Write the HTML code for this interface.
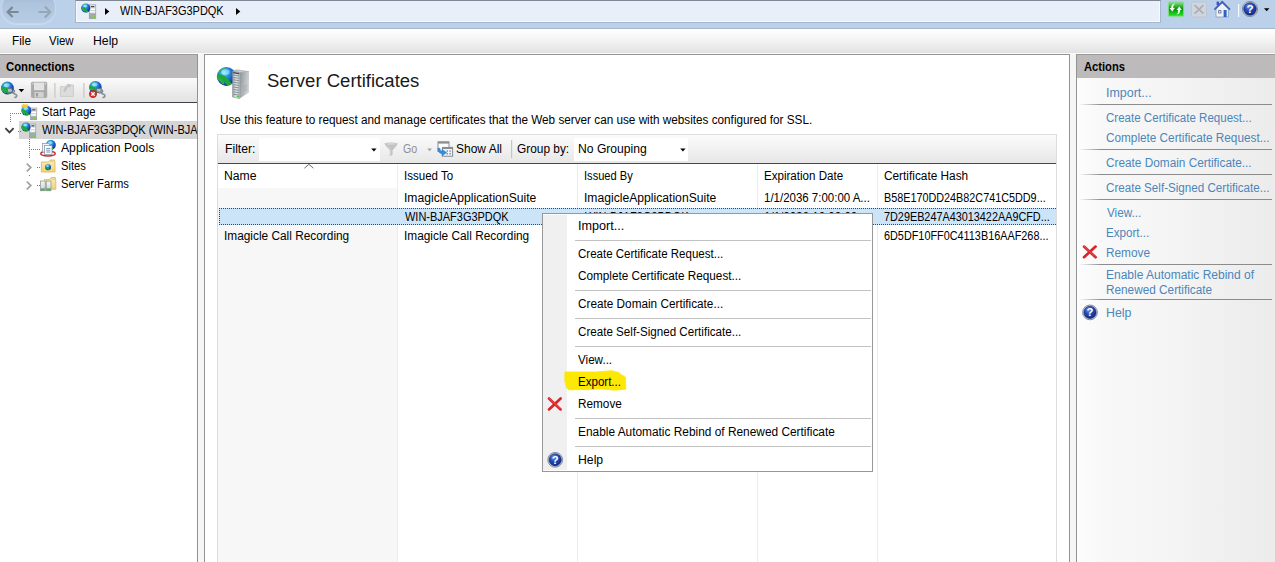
<!DOCTYPE html>
<html><head><meta charset="utf-8"><title>IIS Manager - Server Certificates</title>
<style>
html,body{margin:0;padding:0}
body{width:1275px;height:562px;overflow:hidden;position:relative;background:#f6f6f6;font-family:"Liberation Sans",sans-serif;font-size:12px;color:#000}
div,span,svg{position:absolute;box-sizing:border-box}
.t{white-space:pre;line-height:20px;transform-origin:0 0;display:block}
#topbar{left:0;top:0;width:1275px;height:28px;background:#bbd1ea}
#topline{left:0;top:28px;width:1275px;height:1px;background:#a9b8c9}
#navglass{left:1px;top:-8px;width:55px;height:32px;border-radius:16px/15px;background:linear-gradient(#9fb5cf 0%,#aec4dd 35%,#b7cde6 100%);border:1px solid #c6d8ee;border-top-color:#9db2cc;box-shadow:0 1px 1px rgba(205,222,242,.9)}
#addr{left:75px;top:0;width:1086px;height:23px;background:#e9eff9;border:1px solid #a6b6cd;border-top-color:#7d8796;box-shadow:inset -1px -1px 0 #f6f9fe,inset 1px 0 0 #f6f9fe}
#menubar{left:0;top:29px;width:1275px;height:24px;background:linear-gradient(#ffffff 0%,#f7f7f7 35%,#ececec 70%,#e2e2e2 100%)}
#menuline{left:0;top:53px;width:1275px;height:1px;background:#fbfbfb}
.phead{height:23px;background:#bcbaba}
#conn{left:0;top:54px;width:198px;height:508px;background:#fff;border-right:1px solid #929292;border-top:1px solid #9a9a9a}
#connhead{left:0;top:0;width:197px;top:0}
#conntb{left:0;top:23px;width:197px;height:25px;background:linear-gradient(#fbfbfb,#eeeeee 50%,#e3e2e2);border-bottom:1px solid #3e3e4c}
#sel{left:19px;top:121px;width:178px;height:18px;background:#d5d5d5}
#center{left:204px;top:54px;width:866px;height:520px;background:#fff;border:1px solid #939393}
#fbar{left:218px;top:134px;width:838px;height:29px;background:linear-gradient(#fbfbfb,#f1f1f1 50%,#e7e7e7);border-top:1px solid #dcdcdc}
#fbarline{left:218px;top:163px;width:838px;height:1px;background:#45455a}
#finput{left:259px;top:138px;width:121px;height:23px;background:#fff}
#ginput{left:574px;top:138px;width:114px;height:23px;background:#fff}
#listl{left:217px;top:134px;width:1px;height:440px;background:#dcdcdc}
#listr{left:1056px;top:134px;width:1px;height:440px;background:#dcdcdc}
#namecol{left:218px;top:188px;width:179px;height:380px;background:#f7f7f7}
.cs{top:164px;width:1px;height:400px;background:#ebecf0}
#rowsel{left:219px;top:208px;width:837px;height:17px;background:#cce4f7;border:1px dotted #444;border-right:none}
#actions{left:1076px;top:54px;width:200px;height:520px;background:linear-gradient(90deg,#fdfdfd 0%,#f8f8f8 14%,#f4f4f4 50%,#ebebeb 100%);border-left:1px solid #939393;border-top:1px solid #9a9a9a}
.asep{left:1079px;width:193px;height:1px;background:linear-gradient(90deg,rgba(138,138,138,0) 0,#8c8c8c 22px,#8c8c8c 100%)}
#ctx{left:542px;top:213px;width:331px;height:259px;background:#fff;border:1px solid #989898}
#ctxg{left:0;top:1px;width:24px;height:255px;background:#f0f0f0}
.msep{left:575px;width:296px;height:1px;background:#c3c3c3}
</style></head><body>
<div id="topbar"></div><div id="navglass"></div><div id="topline"></div>
<div id="addr"></div>
<div id="menubar"></div><div id="menuline"></div>

<div id="conn"><div class="phead" id="connhead"></div><div id="conntb"></div></div>
<div id="sel"></div>
<div id="center"></div>
<div id="fbar"></div><div id="fbarline"></div><div id="finput"></div><div id="ginput"></div>
<div id="listl"></div><div id="listr"></div>
<div id="namecol"></div>
<div class="cs" style="left:397px"></div><div class="cs" style="left:577px"></div><div class="cs" style="left:757px"></div><div class="cs" style="left:877px"></div>
<div id="rowsel"></div>
<div id="actions"><div class="phead" style="left:0;top:0;width:199px"></div></div>
<div class="asep" style="top:104px"></div><div class="asep" style="top:149px"></div><div class="asep" style="top:174px"></div><div class="asep" style="top:199px"></div><div class="asep" style="top:264px"></div><div class="asep" style="top:299px"></div>
<svg style="left:0;top:0" width="1275" height="562" viewBox="0 0 1275 562"><defs>
<radialGradient id="gGlobe" cx="0.38" cy="0.3" r="0.75"><stop offset="0" stop-color="#8fe6ff"/><stop offset="0.3" stop-color="#2f9be0"/><stop offset="0.7" stop-color="#1b4fc0"/><stop offset="1" stop-color="#142c86"/></radialGradient>
<radialGradient id="gHelp" cx="0.4" cy="0.3" r="0.8"><stop offset="0" stop-color="#6f94e8"/><stop offset="0.45" stop-color="#2247b4"/><stop offset="1" stop-color="#0f2577"/></radialGradient>
<linearGradient id="gSrvF" x1="0" y1="0" x2="1" y2="0"><stop offset="0" stop-color="#9aa2a8"/><stop offset="0.5" stop-color="#e4e8ea"/><stop offset="1" stop-color="#b4babe"/></linearGradient>
<linearGradient id="gSrvS" x1="0" y1="0" x2="1" y2="0.3"><stop offset="0" stop-color="#8f9599"/><stop offset="1" stop-color="#cfd3d5"/></linearGradient>
<linearGradient id="gGreen" x1="0" y1="0" x2="0" y2="1"><stop offset="0" stop-color="#8fe08f"/><stop offset="0.3" stop-color="#35b535"/><stop offset="0.5" stop-color="#028a02"/><stop offset="0.62" stop-color="#08b008"/><stop offset="1" stop-color="#2fe02f"/></linearGradient>
<linearGradient id="gFolder" x1="0" y1="0" x2="0" y2="1"><stop offset="0" stop-color="#fbeeb4"/><stop offset="1" stop-color="#f0d27a"/></linearGradient>
<linearGradient id="gSmallSrv" x1="0" y1="0" x2="0" y2="1"><stop offset="0" stop-color="#e6e9eb"/><stop offset="0.55" stop-color="#c8cdd0"/><stop offset="1" stop-color="#8f979b"/></linearGradient>
</defs><rect x="89.19999999999999" y="4.8" width="6.6" height="13.8" fill="url(#gSmallSrv)" stroke="#8e969a" stroke-width="0.6"/><rect x="90.99999999999999" y="6.1" width="3.3999999999999995" height="1.1" fill="#33383c"/><rect x="89.89999999999999" y="8.5" width="5.199999999999999" height="1.5" fill="#ffffff"/><rect x="89.89999999999999" y="11.1" width="5.199999999999999" height="1.5" fill="#ffffff"/><rect x="89.49999999999999" y="13.5" width="6.0" height="4.800000000000001" fill="#a2a9ac"/><rect x="92.59999999999998" y="16.0" width="2.6" height="1.9" fill="#7ed62a"/><clipPath id="gc1"><circle cx="85.8" cy="8.0" r="4.6"/></clipPath><circle cx="85.8" cy="8.0" r="4.6" fill="url(#gGlobe)"/><g clip-path="url(#gc1)"><path d="M81.20 8.00 Q84.19 8.00 85.57 9.84 T87.87 12.60" stroke="#1fa83a" stroke-width="2.30" fill="none" stroke-linecap="round"/><path d="M82.12 9.15 q1.38 0.46 2.07 2.07" stroke="#28b044" stroke-width="1.38" fill="none" stroke-linecap="round"/><path d="M82.12 5.70 q1.15 -1.84 3.22 -2.30 q-0.23 1.38 -1.84 1.84 q-0.92 0.92 -1.38 0.46z" fill="#35b24e" opacity="0.8"/><ellipse cx="85.34" cy="5.93" rx="2.07" ry="1.38" fill="#aef2ff" opacity="0.55"/></g>
<path d="M105 8 L109.3 11.5 L105 15z" fill="#000"/>
<path d="M236 8 L240.3 11.5 L236 15z" fill="#000"/>
<rect x="1168.4" y="1.9" width="15.2" height="14.4" rx="0.8" fill="url(#gGreen)" stroke="#86dc86" stroke-width="0.9"/>
<path d="M1175 3.4 q-2.2 1.8 -1.6 4.6 h1.5 l-2.7 3.4 l-2.7 -3.4 h1.7 q-0.3 -3.8 3.8 -4.6z" fill="#f4fbf4"/>
<path d="M1176.4 14.6 q2.2 -1.8 1.6 -4.6 h-1.5 l2.7 -3.4 l2.7 3.4 h-1.7 q0.3 3.8 -3.8 4.6z" fill="#f4fbf4"/>
<rect x="1191.5" y="2" width="15" height="15" rx="1" fill="#d0d6dd" stroke="#bcc3cb" stroke-width="0.8"/>
<path d="M1194.6 5.2 L1203.4 13.6 M1203.4 5.2 L1194.6 13.6" stroke="#a9afb6" stroke-width="1.8" fill="none"/>
<path d="M1216 9 v8 h12.4 v-8 l-6.2 -6z" fill="#eef2f7" stroke="#8e9cb5" stroke-width="0.8"/>
<path d="M1214.4 9.6 L1222.2 1.8 L1230 9.6" stroke="#4460b8" stroke-width="1.7" fill="none" stroke-linejoin="miter"/>
<rect x="1216.6" y="1.6" width="2.4" height="3.6" fill="#3b55c0"/>
<rect x="1223.6" y="10" width="3" height="7" fill="#2f62c8"/>
<rect x="1218.2" y="10.2" width="3.2" height="3.2" fill="#5a6a86"/>
<rect x="1219" y="11" width="1.6" height="1.6" fill="#d7e4f5"/>
<rect x="1238" y="4" width="1.2" height="13" fill="#ffffff" opacity="0.9"/>
<circle cx="1250" cy="9" r="7.6" fill="#cfd4de" stroke="#7d8598" stroke-width="0.9"/><circle cx="1250" cy="9" r="6.3" fill="url(#gHelp)" stroke="#0d1f66" stroke-width="0.6"/><text x="1250" y="13.00" text-anchor="middle" font-family="Liberation Sans,sans-serif" font-weight="700" font-size="11.6" fill="#fff">?</text>
<path d="M1264 8.2 L1269.4 8.2 L1266.7 11.2z" fill="#000"/>
<path d="M18.6 12 H8.4 M12.6 7 L7.6 12 L12.6 17" stroke="#7b8896" stroke-width="2.2" fill="none" stroke-linecap="butt" stroke-linejoin="miter"/>
<path d="M39.2 12 H49.6 M45.4 7 L50.4 12 L45.4 17" stroke="#98a7b8" stroke-width="2.2" fill="none" stroke-linecap="round" stroke-linejoin="round"/>
<path d="M9.2 90.5 l3.2 -1.5 l2 2 l-1.2 2.2 l2.6 1.2 q1.6 1.2 0.4 2.6 l-1.2 0.4" stroke="#8793a0" stroke-width="1.7" fill="none" stroke-linecap="round" stroke-linejoin="round"/><rect x="9.799999999999999" y="89.6" width="4.2" height="3.2" rx="0.8" fill="#c9d2da" stroke="#5d6b78" stroke-width="0.7" transform="rotate(-20 11.7 91)"/>
<clipPath id="gc2"><circle cx="7.4" cy="88" r="6.4"/></clipPath><circle cx="7.4" cy="88" r="6.4" fill="url(#gGlobe)"/><g clip-path="url(#gc2)"><path d="M1.00 88.00 Q5.16 88.00 7.08 90.56 T10.28 94.40" stroke="#1fa83a" stroke-width="3.20" fill="none" stroke-linecap="round"/><path d="M2.28 89.60 q1.92 0.64 2.88 2.88" stroke="#28b044" stroke-width="1.92" fill="none" stroke-linecap="round"/><path d="M2.28 84.80 q1.60 -2.56 4.48 -3.20 q-0.32 1.92 -2.56 2.56 q-1.28 1.28 -1.92 0.64z" fill="#35b24e" opacity="0.8"/><ellipse cx="6.76" cy="85.12" rx="2.88" ry="1.92" fill="#aef2ff" opacity="0.55"/></g>
<rect x="7.6" y="88.6" width="4.6" height="3.6" rx="0.8" fill="#b8c2cc" stroke="#59636e" stroke-width="0.7"/>
<path d="M18.6 89 L24.200000000000003 89 L21.400000000000002 92.2z" fill="#000"/>
<rect x="31.4" y="82.2" width="15.4" height="15.4" rx="1" fill="#a9a9a9" stroke="#9a9a9a" stroke-width="0.6"/>
<rect x="34" y="82.6" width="10.2" height="7.6" fill="#e3e3e3"/>
<rect x="34.6" y="92" width="9" height="5.4" fill="#d2d2d2"/>
<rect x="36" y="93" width="2" height="3.6" fill="#9c9c9c"/>
<rect x="32.2" y="83.2" width="1.2" height="1.2" fill="#e8e8e8"/><rect x="44.8" y="83.2" width="1.2" height="1.2" fill="#e8e8e8"/>
<rect x="54.3" y="83" width="1.2" height="15" fill="#c9c6bc"/>
<path d="M60.4 86.6 h5 l1.4 -1.6 h6.6 v11.4 h-13z" fill="#dcdcdc" stroke="#c6c6c6" stroke-width="0.8"/>
<path d="M63.2 91.6 q1.2 -4.4 4.6 -6 l-0.8 -1.8 l4 0.6 l-1.2 3.6 l-0.9 -1.4 q-2.2 1.2 -3.6 5.4z" fill="#c2c2c2"/>
<rect x="83.3" y="83" width="1.2" height="15" fill="#c9c6bc"/>
<path d="M97.4 90.5 l3.2 -1.5 l2 2 l-1.2 2.2 l2.6 1.2 q1.6 1.2 0.4 2.6 l-1.2 0.4" stroke="#8793a0" stroke-width="1.7" fill="none" stroke-linecap="round" stroke-linejoin="round"/><rect x="98.0" y="89.6" width="4.2" height="3.2" rx="0.8" fill="#c9d2da" stroke="#5d6b78" stroke-width="0.7" transform="rotate(-20 99.9 91)"/>
<clipPath id="gc3"><circle cx="95.4" cy="87.2" r="6.2"/></clipPath><circle cx="95.4" cy="87.2" r="6.2" fill="url(#gGlobe)"/><g clip-path="url(#gc3)"><path d="M89.20 87.20 Q93.23 87.20 95.09 89.68 T98.19 93.40" stroke="#1fa83a" stroke-width="3.10" fill="none" stroke-linecap="round"/><path d="M90.44 88.75 q1.86 0.62 2.79 2.79" stroke="#28b044" stroke-width="1.86" fill="none" stroke-linecap="round"/><path d="M90.44 84.10 q1.55 -2.48 4.34 -3.10 q-0.31 1.86 -2.48 2.48 q-1.24 1.24 -1.86 0.62z" fill="#35b24e" opacity="0.8"/><ellipse cx="94.78" cy="84.41" rx="2.79" ry="1.86" fill="#aef2ff" opacity="0.55"/></g>
<rect x="96.6" y="88.4" width="4.6" height="3.6" rx="0.8" fill="#b8c2cc" stroke="#59636e" stroke-width="0.7"/>
<circle cx="93" cy="94" r="3.7" fill="#d32a2a" stroke="#9c1616" stroke-width="0.5"/>
<path d="M91.3 92.3 L94.7 95.7 M94.7 92.3 L91.3 95.7" stroke="#fff" stroke-width="1.3"/>
<g shape-rendering="crispEdges"><rect x="10" y="113" width="1" height="1" fill="#7a7a7a"/><rect x="12" y="113" width="1" height="1" fill="#7a7a7a"/><rect x="14" y="113" width="1" height="1" fill="#7a7a7a"/><rect x="16" y="113" width="1" height="1" fill="#7a7a7a"/><rect x="18" y="113" width="1" height="1" fill="#7a7a7a"/><rect x="20" y="113" width="1" height="1" fill="#7a7a7a"/><rect x="10" y="113" width="1" height="1" fill="#7a7a7a"/><rect x="10" y="115" width="1" height="1" fill="#7a7a7a"/><rect x="10" y="117" width="1" height="1" fill="#7a7a7a"/><rect x="10" y="119" width="1" height="1" fill="#7a7a7a"/><rect x="10" y="121" width="1" height="1" fill="#7a7a7a"/><rect x="18" y="131" width="1" height="1" fill="#7a7a7a"/><rect x="20" y="131" width="1" height="1" fill="#7a7a7a"/><rect x="29" y="139" width="1" height="1" fill="#7a7a7a"/><rect x="29" y="141" width="1" height="1" fill="#7a7a7a"/><rect x="29" y="143" width="1" height="1" fill="#7a7a7a"/><rect x="29" y="145" width="1" height="1" fill="#7a7a7a"/><rect x="29" y="147" width="1" height="1" fill="#7a7a7a"/><rect x="29" y="149" width="1" height="1" fill="#7a7a7a"/><rect x="29" y="151" width="1" height="1" fill="#7a7a7a"/><rect x="29" y="153" width="1" height="1" fill="#7a7a7a"/><rect x="29" y="155" width="1" height="1" fill="#7a7a7a"/><rect x="29" y="157" width="1" height="1" fill="#7a7a7a"/><rect x="29" y="149" width="1" height="1" fill="#7a7a7a"/><rect x="31" y="149" width="1" height="1" fill="#7a7a7a"/><rect x="33" y="149" width="1" height="1" fill="#7a7a7a"/><rect x="35" y="149" width="1" height="1" fill="#7a7a7a"/><rect x="37" y="149" width="1" height="1" fill="#7a7a7a"/><rect x="39" y="149" width="1" height="1" fill="#7a7a7a"/><rect x="37" y="167" width="1" height="1" fill="#7a7a7a"/><rect x="39" y="167" width="1" height="1" fill="#7a7a7a"/><rect x="29" y="175" width="1" height="1" fill="#7a7a7a"/><rect x="37" y="185" width="1" height="1" fill="#7a7a7a"/><rect x="39" y="185" width="1" height="1" fill="#7a7a7a"/></g>
<path d="M5.4 128.2 L9.5 132.4 L13.6 128.2" stroke="#3c3c3c" stroke-width="1.8" fill="none"/>
<path d="M26.8 163.6 L30.8 167.5 L26.8 171.4" stroke="#a0a0a0" stroke-width="1.7" fill="none"/>
<path d="M26.8 181.6 L30.8 185.5 L26.8 189.4" stroke="#a0a0a0" stroke-width="1.7" fill="none"/>
<rect x="30.4" y="108" width="6.4" height="11.8" fill="url(#gSmallSrv)" stroke="#8e969a" stroke-width="0.6"/><rect x="32.199999999999996" y="109.3" width="3.2" height="1.1" fill="#33383c"/><rect x="31.099999999999998" y="111.7" width="5.0" height="1.5" fill="#ffffff"/><rect x="31.099999999999998" y="114.3" width="5.0" height="1.5" fill="#ffffff"/><rect x="30.7" y="116.7" width="5.800000000000001" height="2.8000000000000007" fill="#a2a9ac"/><rect x="33.599999999999994" y="117.2" width="2.6" height="1.9" fill="#7ed62a"/>
<clipPath id="gc4"><circle cx="26.4" cy="110.6" r="5"/></clipPath><circle cx="26.4" cy="110.6" r="5" fill="url(#gGlobe)"/><g clip-path="url(#gc4)"><path d="M21.40 110.60 Q24.65 110.60 26.15 112.60 T28.65 115.60" stroke="#1fa83a" stroke-width="2.50" fill="none" stroke-linecap="round"/><path d="M22.40 111.85 q1.50 0.50 2.25 2.25" stroke="#28b044" stroke-width="1.50" fill="none" stroke-linecap="round"/><path d="M22.40 108.10 q1.25 -2.00 3.50 -2.50 q-0.25 1.50 -2.00 2.00 q-1.00 1.00 -1.50 0.50z" fill="#35b24e" opacity="0.8"/><ellipse cx="25.90" cy="108.35" rx="2.25" ry="1.50" fill="#aef2ff" opacity="0.55"/></g>
<path d="M21.4 105.4 l2.2 -1.6 l1.6 1 l2.4 -0.8 l0.4 2.4 l-2.2 1.8 l-2.4 -0.6 l-1.8 0.4z" fill="#f7c92c"/>
<rect x="29.6" y="124" width="6.2" height="13.6" fill="url(#gSmallSrv)" stroke="#8e969a" stroke-width="0.6"/><rect x="31.400000000000002" y="125.3" width="3.0" height="1.1" fill="#33383c"/><rect x="30.3" y="127.7" width="4.800000000000001" height="1.5" fill="#ffffff"/><rect x="30.3" y="130.3" width="4.800000000000001" height="1.5" fill="#ffffff"/><rect x="29.900000000000002" y="132.7" width="5.6000000000000005" height="4.6" fill="#a2a9ac"/><rect x="32.6" y="135.0" width="2.6" height="1.9" fill="#7ed62a"/>
<clipPath id="gc5"><circle cx="26" cy="127" r="4.6"/></clipPath><circle cx="26" cy="127" r="4.6" fill="url(#gGlobe)"/><g clip-path="url(#gc5)"><path d="M21.40 127.00 Q24.39 127.00 25.77 128.84 T28.07 131.60" stroke="#1fa83a" stroke-width="2.30" fill="none" stroke-linecap="round"/><path d="M22.32 128.15 q1.38 0.46 2.07 2.07" stroke="#28b044" stroke-width="1.38" fill="none" stroke-linecap="round"/><path d="M22.32 124.70 q1.15 -1.84 3.22 -2.30 q-0.23 1.38 -1.84 1.84 q-0.92 0.92 -1.38 0.46z" fill="#35b24e" opacity="0.8"/><ellipse cx="25.54" cy="124.93" rx="2.07" ry="1.38" fill="#aef2ff" opacity="0.55"/></g>
<ellipse cx="48" cy="153.6" rx="7.2" ry="2.4" fill="none" stroke="#c8322c" stroke-width="1.5"/>
<clipPath id="gc6"><circle cx="50.8" cy="145" r="5"/></clipPath><circle cx="50.8" cy="145" r="5" fill="url(#gGlobe)"/><g clip-path="url(#gc6)"><path d="M45.80 145.00 Q49.05 145.00 50.55 147.00 T53.05 150.00" stroke="#1fa83a" stroke-width="2.50" fill="none" stroke-linecap="round"/><path d="M46.80 146.25 q1.50 0.50 2.25 2.25" stroke="#28b044" stroke-width="1.50" fill="none" stroke-linecap="round"/><path d="M46.80 142.50 q1.25 -2.00 3.50 -2.50 q-0.25 1.50 -2.00 2.00 q-1.00 1.00 -1.50 0.50z" fill="#35b24e" opacity="0.8"/><ellipse cx="50.30" cy="142.75" rx="2.25" ry="1.50" fill="#aef2ff" opacity="0.55"/></g>
<rect x="42.4" y="143.4" width="7.2" height="8.6" fill="#f4f6f8" stroke="#8a96a3" stroke-width="0.7"/>
<rect x="44.6" y="145.6" width="7.4" height="8.8" fill="#ffffff" stroke="#7f8b98" stroke-width="0.7"/>
<path d="M46.2 148.4 h4.2 M46.2 150.2 h4.2 M46.2 152 h4.2" stroke="#5b79a8" stroke-width="0.8"/>
<path d="M41.4 162 h7.4 l1.4 -2 h4.4 v2 h0.4 v10 h-13.6z" fill="url(#gFolder)" stroke="#d8b75c" stroke-width="0.8"/>
<rect x="51" y="160.2" width="2.6" height="1.4" fill="#fff7d8" stroke="#b9a064" stroke-width="0.4"/>
<clipPath id="gc7"><circle cx="48" cy="167.2" r="3"/></clipPath><circle cx="48" cy="167.2" r="3" fill="url(#gGlobe)"/><g clip-path="url(#gc7)"><path d="M45.00 167.20 Q46.95 167.20 47.85 168.40 T49.35 170.20" stroke="#1fa83a" stroke-width="1.50" fill="none" stroke-linecap="round"/><path d="M45.60 167.95 q0.90 0.30 1.35 1.35" stroke="#28b044" stroke-width="0.90" fill="none" stroke-linecap="round"/><path d="M45.60 165.70 q0.75 -1.20 2.10 -1.50 q-0.15 0.90 -1.20 1.20 q-0.60 0.60 -0.90 0.30z" fill="#35b24e" opacity="0.8"/><ellipse cx="47.70" cy="165.85" rx="1.35" ry="0.90" fill="#aef2ff" opacity="0.55"/></g>
<path d="M44.4 179.6 h5.4 l1.2 -2 h4.4 v2 h0.4 v9.6 h-11.4z" fill="url(#gFolder)" stroke="#d8b75c" stroke-width="0.8"/>
<rect x="52" y="178" width="2.4" height="1.3" fill="#fff7d8" stroke="#b9a064" stroke-width="0.4"/>
<rect x="40.4" y="181" width="4.8" height="9.8" fill="url(#gSmallSrv)" stroke="#7f888d" stroke-width="0.6"/>
<path d="M41.0 183 h3.6 M41.0 185 h3.6 M41.0 187 h3.6" stroke="#fff" stroke-width="0.9"/>
<rect x="41.0" y="188.6" width="3.6" height="1.8" fill="#3fc23a"/>
<rect x="46.2" y="181" width="4.8" height="9.8" fill="url(#gSmallSrv)" stroke="#7f888d" stroke-width="0.6"/>
<path d="M46.800000000000004 183 h3.6 M46.800000000000004 185 h3.6 M46.800000000000004 187 h3.6" stroke="#fff" stroke-width="0.9"/>
<rect x="46.800000000000004" y="188.6" width="3.6" height="1.8" fill="#3fc23a"/>
<clipPath id="gc8"><circle cx="226.4" cy="76.4" r="9.5"/></clipPath><circle cx="226.4" cy="76.4" r="9.5" fill="url(#gGlobe)"/><g clip-path="url(#gc8)"><path d="M216.90 76.40 Q223.08 76.40 225.93 80.20 T230.68 85.90" stroke="#1fa83a" stroke-width="4.75" fill="none" stroke-linecap="round"/><path d="M218.80 78.78 q2.85 0.95 4.28 4.28" stroke="#28b044" stroke-width="2.85" fill="none" stroke-linecap="round"/><path d="M218.80 71.65 q2.38 -3.80 6.65 -4.75 q-0.48 2.85 -3.80 3.80 q-1.90 1.90 -2.85 0.95z" fill="#35b24e" opacity="0.8"/><ellipse cx="225.45" cy="72.12" rx="4.28" ry="2.85" fill="#aef2ff" opacity="0.55"/></g>
<path d="M232.5 71.3 L236.2 69.8 L249 71.6 L239.8 72.8z" fill="#c9cdd0" stroke="#8a9196" stroke-width="0.5"/>
<path d="M239.7 72.6 L249 71.6 L249 92.6 L239.7 98.6z" fill="url(#gSrvS)"/>
<path d="M232.5 71.3 L239.7 72.6 L239.7 98.6 L232.5 97.1z" fill="url(#gSrvF)" stroke="#80888d" stroke-width="0.5"/>
<path d="M233.2 75.0 L239 75.9" stroke="#7f898f" stroke-width="0.9"/>
<path d="M233.2 77.4 L239 78.3" stroke="#7f898f" stroke-width="0.9"/>
<path d="M233.2 79.8 L239 80.7" stroke="#7f898f" stroke-width="0.9"/>
<path d="M233.2 82.2 L239 83.1" stroke="#7f898f" stroke-width="0.9"/>
<path d="M233.2 84.6 L239 85.5" stroke="#7f898f" stroke-width="0.9"/>
<path d="M233.2 87.0 L239 87.9" stroke="#7f898f" stroke-width="0.9"/>
<path d="M233.2 89.4 L239 90.3" stroke="#7f898f" stroke-width="0.9"/>
<path d="M233.2 91.8 L239 92.7" stroke="#7f898f" stroke-width="0.9"/>
<path d="M233.2 94.2 L239 95.1" stroke="#7f898f" stroke-width="0.9"/>
<path d="M233.2 72.6 L239 73.6" stroke="#3a3f44" stroke-width="1.2"/>
<path d="M236.6 96.4 L239 96.9" stroke="#44d23c" stroke-width="1.4"/>
<path d="M243 87 l4.4 -2 M243 88.6 l4.4 -2 M243 90.2 l4.4 -2 M243 91.8 l4.4 -2" stroke="#a2a8ac" stroke-width="0.6"/>
<path d="M371.2 148.4 L376.59999999999997 148.4 L373.9 151.4z" fill="#000"/>
<path d="M384.2 143.4 q6.9 -1.6 13.8 0 q-2.6 4.2 -5.4 6.8 v4.6 l-2.8 1.4 v-6 q-3 -2.6 -5.6 -6.8z" fill="#c2c2c2"/>
<path d="M385.6 143.9 q5.5 -1.1 11 0 q-5.5 1.3 -11 0z" fill="#dedede"/>
<path d="M387.4 146 q2 2.4 3.2 3.6 v5" stroke="#d8d8d8" stroke-width="0.8" fill="none"/>
<path d="M427.2 148.4 L432.0 148.4 L429.59999999999997 151.20000000000002z" fill="#a2a2a2"/>
<rect x="438" y="141.8" width="11" height="9.6" fill="#ffffff" stroke="#8a8f94" stroke-width="1"/>
<rect x="438" y="141.8" width="11" height="1.8" fill="#8a8f94"/>
<rect x="442.4" y="147.4" width="10.2" height="8.8" fill="#f2f4f6" stroke="#868b90" stroke-width="1"/>
<rect x="442.4" y="147.4" width="10.2" height="1.6" fill="#868b90"/>
<rect x="446.6" y="150.4" width="1.4" height="1.4" fill="#7a7fc0"/><rect x="449.4" y="150.4" width="1.4" height="1.4" fill="#7a7fc0"/><rect x="446.6" y="153" width="1.4" height="1.4" fill="#7a7fc0"/><rect x="449.4" y="153" width="1.4" height="1.4" fill="#7a7fc0"/>
<path d="M437.8 148.2 q0 5 4.4 5.6 v2 l4.4 -3.2 l-4.4 -3.2 v2 q-2.2 -0.2 -2.2 -3.2z" fill="#2f8fe0" stroke="#1c62ad" stroke-width="0.4"/>
<rect x="511" y="140" width="1.2" height="18" fill="#c9c6bc"/>
<path d="M680.2 148.4 L685.6 148.4 L682.9000000000001 151.4z" fill="#000"/>
<path d="M304.4 168.2 L308.9 164.3 L313.4 168.2" stroke="#6d6d6d" stroke-width="1" fill="none"/>
<path d="M1084 246.6 L1095.6 257.2 M1095.6 246.6 L1084 257.2" stroke="#d8242a" stroke-width="2.7" stroke-linecap="round" fill="none"/><path d="M1084 246.2 L1095.1999999999998 256.4" stroke="#ef6a6a" stroke-width="0.8" stroke-linecap="round" fill="none" opacity="0.8"/>
<circle cx="1090" cy="312.4" r="7.3999999999999995" fill="#cfd4de" stroke="#7d8598" stroke-width="0.9"/><circle cx="1090" cy="312.4" r="6.1" fill="url(#gHelp)" stroke="#0d1f66" stroke-width="0.6"/><text x="1090" y="316.30" text-anchor="middle" font-family="Liberation Sans,sans-serif" font-weight="700" font-size="11.3" fill="#fff">?</text></svg>
<span class="t" style="left:120.40px;top:1px;font-size:12px;transform:scaleX(0.9148);">WIN-BJAF3G3PDQK</span>
<span class="t" style="left:11.82px;top:31px;font-size:12px;transform:scaleX(0.9803);">File</span>
<span class="t" style="left:49.40px;top:31px;font-size:12px;transform:scaleX(0.9553);">View</span>
<span class="t" style="left:93.18px;top:31px;font-size:12px;transform:scaleX(1.0194);">Help</span>
<span class="t" style="left:5.83px;top:57px;font-size:12px;transform:scaleX(0.9436);font-weight:700;">Connections</span>
<span class="t" style="left:41.73px;top:102px;font-size:12px;transform:scaleX(0.9435);">Start Page</span>
<div style="position:absolute;left:0;top:0;width:197px;height:562px;overflow:hidden"><span class="t" style="left:42.20px;top:120px;font-size:12px;transform:scaleX(0.9148);">WIN-BJAF3G3PDQK (WIN-BJAF3G3PDQK\Administrator)</span></div>
<span class="t" style="left:61.00px;top:138px;font-size:12px;transform:scaleX(1.0136);">Application Pools</span>
<span class="t" style="left:60.53px;top:156px;font-size:12px;transform:scaleX(0.9320);">Sites</span>
<span class="t" style="left:60.53px;top:174px;font-size:12px;transform:scaleX(0.9338);">Server Farms</span>
<span class="t" style="left:267.24px;top:71px;font-size:18.3px;transform:scaleX(1.0134);color:#1a1a1a;">Server Certificates</span>
<span class="t" style="left:219.72px;top:110px;font-size:12px;transform:scaleX(0.9781);">Use this feature to request and manage certificates that the Web server can use with websites configured for SSL.</span>
<span class="t" style="left:224.59px;top:139px;font-size:12px;transform:scaleX(1.0143);">Filter:</span>
<span class="t" style="left:402.76px;top:139px;font-size:12px;transform:scaleX(0.8867);color:#8e8e8e;">Go</span>
<span class="t" style="left:456.00px;top:139px;font-size:12px;transform:scaleX(0.9989);">Show All</span>
<span class="t" style="left:517.11px;top:139px;font-size:12px;transform:scaleX(0.9893);">Group by:</span>
<span class="t" style="left:577.99px;top:139px;font-size:12px;transform:scaleX(1.0113);">No Grouping</span>
<span class="t" style="left:223.98px;top:166px;font-size:12px;transform:scaleX(1.0164);">Name</span>
<span class="t" style="left:404.24px;top:166px;font-size:12px;transform:scaleX(0.9608);">Issued To</span>
<span class="t" style="left:584.28px;top:166px;font-size:12px;transform:scaleX(0.9243);">Issued By</span>
<span class="t" style="left:764.34px;top:166px;font-size:12px;transform:scaleX(0.9640);">Expiration Date</span>
<span class="t" style="left:884.11px;top:166px;font-size:12px;transform:scaleX(0.9857);">Certificate Hash</span>
<span class="t" style="left:404.19px;top:188px;font-size:12px;transform:scaleX(1.0120);">ImagicleApplicationSuite</span>
<span class="t" style="left:584.19px;top:188px;font-size:12px;transform:scaleX(1.0120);">ImagicleApplicationSuite</span>
<span class="t" style="left:764.04px;top:188px;font-size:12px;transform:scaleX(0.9563);">1/1/2036 7:00:00 A...</span>
<span class="t" style="left:883.70px;top:188px;font-size:12px;transform:scaleX(0.9008);">B58E170DD24B82C741C5DD9...</span>
<span class="t" style="left:404.50px;top:207px;font-size:12px;transform:scaleX(0.9139);">WIN-BJAF3G3PDQK</span>
<span class="t" style="left:584.50px;top:207px;font-size:12px;transform:scaleX(0.9139);">WIN-BJAF3G3PDQK</span>
<span class="t" style="left:764.04px;top:207px;font-size:12px;transform:scaleX(0.9642);">1/1/2036 12:00:00...</span>
<span class="t" style="left:884.15px;top:207px;font-size:12px;transform:scaleX(0.9033);">7D29EB247A43013422AA9CFD...</span>
<span class="t" style="left:224.01px;top:226px;font-size:12px;transform:scaleX(0.9880);">Imagicle Call Recording</span>
<span class="t" style="left:404.21px;top:226px;font-size:12px;transform:scaleX(0.9880);">Imagicle Call Recording</span>
<span class="t" style="left:884.15px;top:226px;font-size:12px;transform:scaleX(0.9043);">6D5DF10FF0C4113B16AAF268...</span>
<span class="t" style="left:1084.27px;top:57px;font-size:12px;transform:scaleX(0.9318);font-weight:700;">Actions</span>
<span class="t" style="left:1105.76px;top:83px;font-size:12px;transform:scaleX(1.0357);color:#4c86b9;">Import...</span>
<span class="t" style="left:1106.12px;top:108px;font-size:12px;transform:scaleX(0.9623);color:#4c86b9;">Create Certificate Request...</span>
<span class="t" style="left:1106.11px;top:128px;font-size:12px;transform:scaleX(0.9803);color:#4c86b9;">Complete Certificate Request...</span>
<span class="t" style="left:1106.11px;top:153px;font-size:12px;transform:scaleX(0.9836);color:#4c86b9;">Create Domain Certificate...</span>
<span class="t" style="left:1106.12px;top:178px;font-size:12px;transform:scaleX(0.9686);color:#4c86b9;">Create Self-Signed Certificate...</span>
<span class="t" style="left:1106.60px;top:203px;font-size:12px;transform:scaleX(0.9735);color:#4c86b9;">View...</span>
<span class="t" style="left:1105.63px;top:223px;font-size:12px;transform:scaleX(0.9684);color:#4c86b9;">Export...</span>
<span class="t" style="left:1105.62px;top:243px;font-size:12px;transform:scaleX(0.9850);color:#4c86b9;">Remove</span>
<span class="t" style="left:1105.60px;top:265px;font-size:12px;transform:scaleX(0.9997);color:#4c86b9;">Enable Automatic Rebind of</span>
<span class="t" style="left:1105.62px;top:280px;font-size:12px;transform:scaleX(0.9822);color:#4c86b9;">Renewed Certificate</span>
<span class="t" style="left:1105.57px;top:303px;font-size:12px;transform:scaleX(1.0280);color:#4c86b9;">Help</span>
<div id="ctx"><div id="ctxg"></div></div>
<div class="msep" style="top:240px"></div><div class="msep" style="top:290px"></div><div class="msep" style="top:318px"></div><div class="msep" style="top:346px"></div><div class="msep" style="top:418px"></div><div class="msep" style="top:446px"></div>
<svg style="left:0;top:0" width="1275" height="562" viewBox="0 0 1275 562"><path d="M564.9 372 L595.6 372 L611.3 370.7 L618.2 372.3 L620.7 374.2 L625.4 377.3 L625.8 389.2 L614.5 390.2 L601.9 388.9 L589.4 389.5 L568.7 389.8 L566.2 387.3 L565.8 383.6 L564.8 381.7z" fill="#fde704" stroke="#fde704" stroke-width="0.8" stroke-linejoin="round"/></svg>
<svg style="left:0;top:0" width="1275" height="562" viewBox="0 0 1275 562"><path d="M549 398.4 L560.6 409.4 M560.6 398.4 L549 409.4" stroke="#d8242a" stroke-width="2.7" stroke-linecap="round" fill="none"/><path d="M549 398.0 L560.2 408.59999999999997" stroke="#ef6a6a" stroke-width="0.8" stroke-linecap="round" fill="none" opacity="0.8"/>
<circle cx="555.2" cy="459.8" r="7.3999999999999995" fill="#cfd4de" stroke="#7d8598" stroke-width="0.9"/><circle cx="555.2" cy="459.8" r="6.1" fill="url(#gHelp)" stroke="#0d1f66" stroke-width="0.6"/><text x="555.2" y="463.70" text-anchor="middle" font-family="Liberation Sans,sans-serif" font-weight="700" font-size="11.3" fill="#fff">?</text></svg>
<span class="t" style="left:577.55px;top:216px;font-size:12px;transform:scaleX(1.0500);">Import...</span>
<span class="t" style="left:578.12px;top:244px;font-size:12px;transform:scaleX(0.9596);">Create Certificate Request...</span>
<span class="t" style="left:578.11px;top:266px;font-size:12px;transform:scaleX(0.9797);">Complete Certificate Request...</span>
<span class="t" style="left:578.11px;top:294px;font-size:12px;transform:scaleX(0.9809);">Create Domain Certificate...</span>
<span class="t" style="left:578.12px;top:322px;font-size:12px;transform:scaleX(0.9680);">Create Self-Signed Certificate...</span>
<span class="t" style="left:578.00px;top:350px;font-size:12px;transform:scaleX(0.9706);">View...</span>
<span class="t" style="left:577.64px;top:372px;font-size:12px;transform:scaleX(0.9614);">Export...</span>
<span class="t" style="left:577.62px;top:394px;font-size:12px;transform:scaleX(0.9803);">Remove</span>
<span class="t" style="left:577.61px;top:422px;font-size:12px;transform:scaleX(0.9899);">Enable Automatic Rebind of Renewed Certificate</span>
<span class="t" style="left:577.58px;top:450px;font-size:12px;transform:scaleX(1.0194);">Help</span>
</body></html>
